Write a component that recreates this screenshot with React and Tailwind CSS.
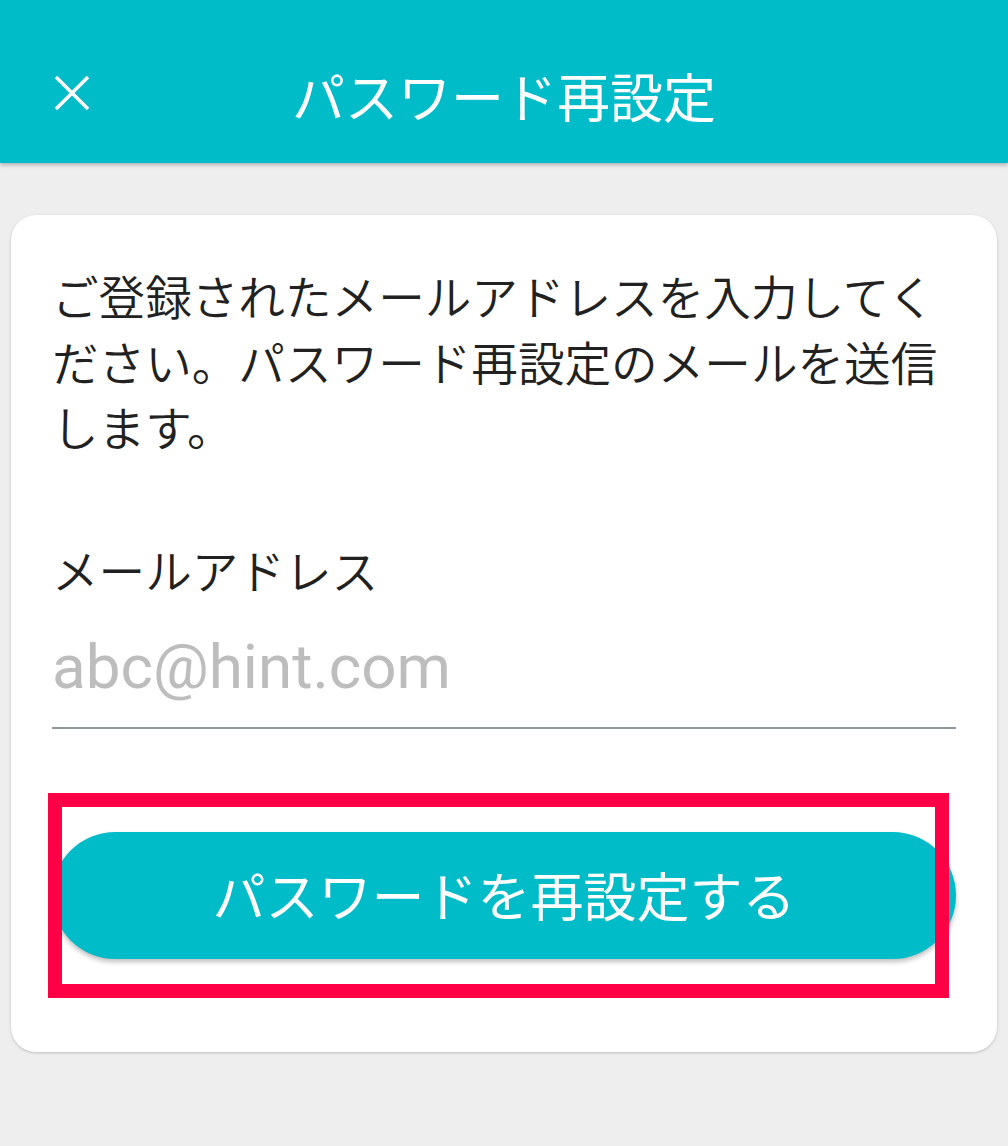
import React from 'react'

const jp = { fontFamily: '"Noto Sans CJK JP", "Noto Sans", sans-serif' }

const CloseIcon = () => (
    <svg width="36" height="36" viewBox="0 0 36 36" fill="none" stroke="white" strokeWidth="3.6">
        <path d="M2 2 L34 34 M34 2 L2 34" />
    </svg>
)

const App = () => {
    const [email, setEmail] = React.useState('')

    return (
        <div className="min-h-screen bg-[#eeeeee]" style={jp}>
            <header className="h-[163px] bg-[#00bcc9] shadow-[0_2px_4px_rgba(0,0,0,0.25)] grid grid-cols-[1fr_auto_1fr] items-center pt-[28px]">
                <div className="pl-[54px] -mt-[6px]">
                    <CloseIcon />
                </div>
                <h1 className="text-[53px] leading-none text-white font-normal">パスワード再設定</h1>
                <div />
            </header>

            <div className="px-[11px] pt-[52px]">
                <div className="bg-white rounded-[25px] shadow-[0_1px_3px_rgba(0,0,0,0.2)] px-[41px] pt-[47px] pb-[93px]">
                    <p className="text-[46.6px] leading-[65.5px] text-[#212121] font-[350]">
                        ご登録されたメールアドレスを入力してください。パスワード再設定のメールを送信します。
                    </p>

                    <label className="block mt-[77px] text-[46.6px] leading-[65px] text-[#212121] font-[350]">
                        メールアドレス
                    </label>
                    <input
                        type="email"
                        value={email}
                        onChange={(e) => setEmail(e.target.value)}
                        placeholder="abc@hint.com"
                        className="block w-full mt-[30px] h-[98px] pb-[24px] text-[62px] leading-[72px] text-[#212121] placeholder:text-[#bdbdbd] border-b-2 border-[#8f9999] outline-none bg-transparent font-normal"
                        style={{ fontFamily: 'Roboto, "Noto Sans", sans-serif' }}
                    />

                    <div className="relative mt-[103px]">
                        <button className="w-full h-[127px] rounded-full bg-[#00bcc9] text-white text-[53px] shadow-[0_3px_5px_rgba(0,0,0,0.25)]">
                            パスワードを再設定する
                        </button>
                        <div className="absolute -top-[39px] -bottom-[39px] -left-[4px] right-[7px] border-[14px] border-[#ff0046] pointer-events-none" />
                    </div>
                </div>
            </div>
        </div>
    )
}

export default App
